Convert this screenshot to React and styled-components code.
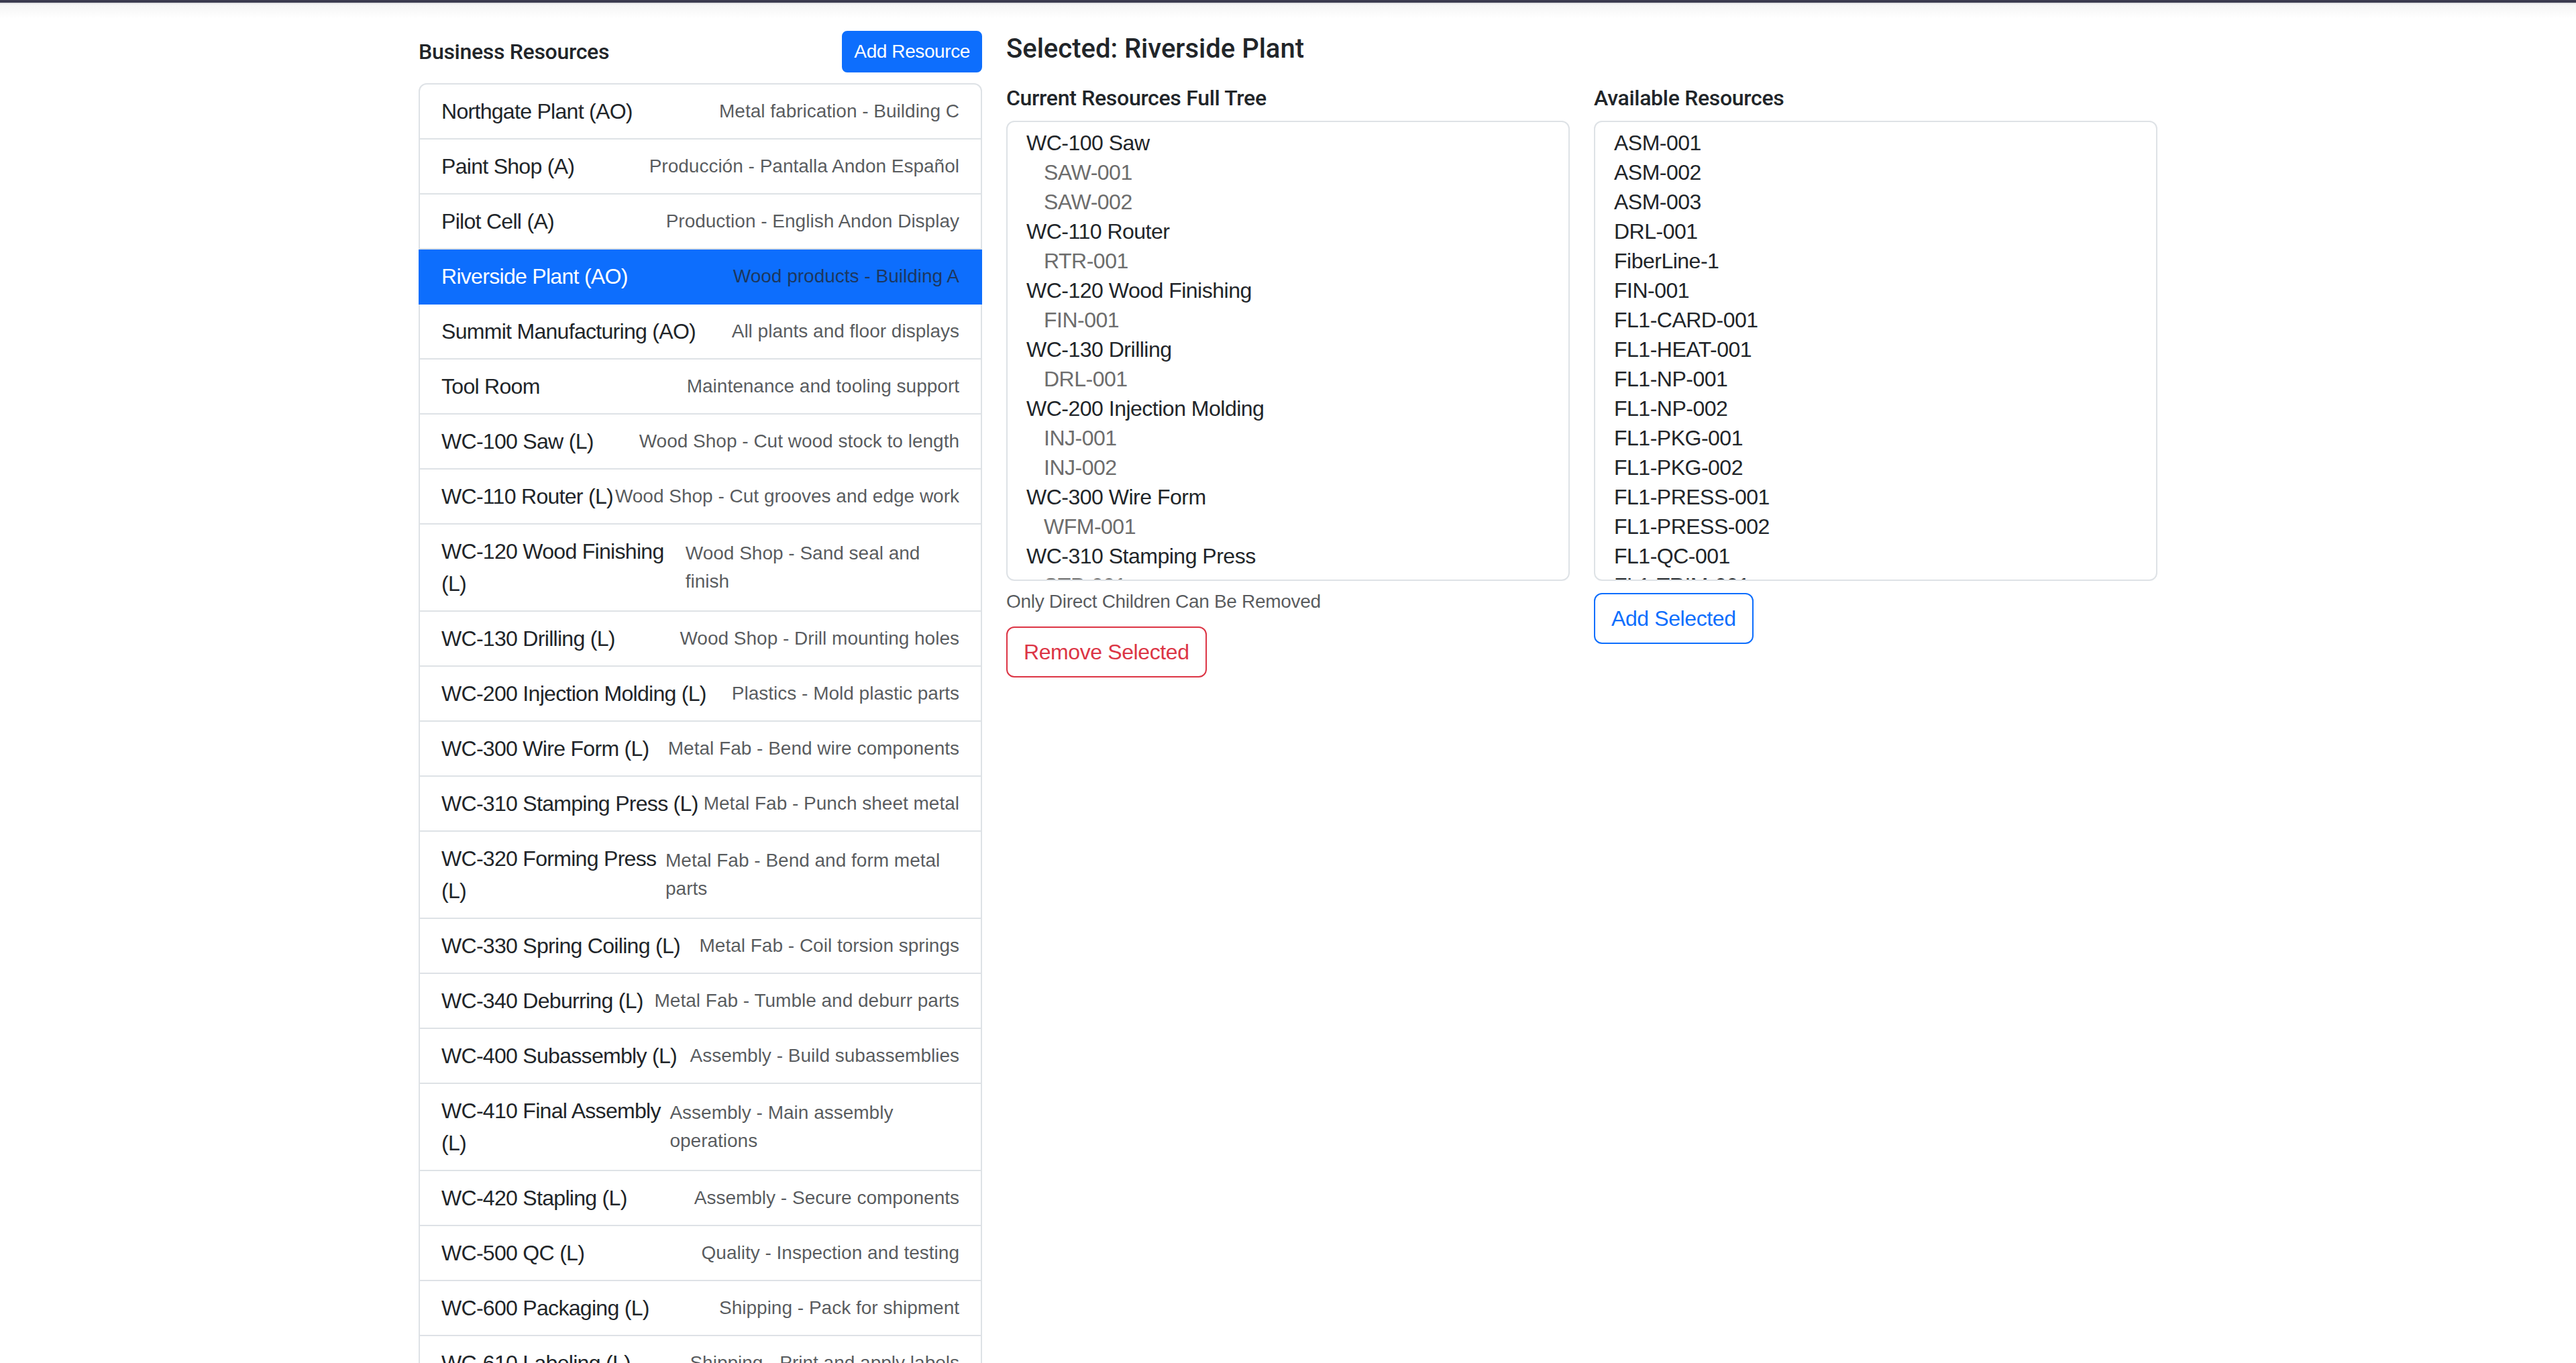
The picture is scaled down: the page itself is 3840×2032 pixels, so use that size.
import styled, { createGlobalStyle } from "styled-components";

const GlobalStyle = createGlobalStyle`
  * { box-sizing: border-box; }
  html, body {
    margin: 0;
    overflow: hidden;
    background: #fff;
  }
  body {
    font-family: "Liberation Sans", Arial, sans-serif;
    font-size: 32px;
    line-height: 1.5;
    color: #212529;
  }
`;

const muted = "rgba(33, 37, 41, 0.75)";

const TopStrip = styled.div`
  height: 28px;
  background: linear-gradient(
    to bottom,
    #3b3a4f 0,
    #3b3a4f 4px,
    #e2e2e4 4px,
    #e2e2e4 6px,
    #f5f5f5 6px,
    #ffffff 28px
  );
`;

const Page = styled.main`
  width: 2592px;
  margin: 0 auto;
  padding-top: 18px;
  display: grid;
  grid-template-columns: repeat(3, 1fr);
  column-gap: 36px;
  align-items: start;
`;

const Sidebar = styled.section`
  display: flex;
  flex-direction: column;
`;

const SidebarHeader = styled.div`
  display: flex;
  align-items: center;
  justify-content: space-between;
  margin-bottom: 16px;
`;

const Heading = styled.h6`
  margin: 0;
  font-family: Roboto, "Liberation Sans", sans-serif;
  font-size: 32px;
  font-weight: 500;
  line-height: 1.2;
  letter-spacing: -0.3px;
  color: #212529;
`;

const SmallButton = styled.button`
  font-family: inherit;
  font-size: 28px;
  line-height: 42px;
  letter-spacing: -0.4px;
  padding: 8px 16px;
  border: 2px solid #0d6efd;
  border-radius: 8px;
  background: #0d6efd;
  color: #fff;
  cursor: pointer;
`;

const ResourceList = styled.ul`
  list-style: none;
  margin: 0;
  padding: 0;
  display: flex;
  flex-direction: column;
`;

const ResourceItem = styled.li`
  display: flex;
  align-items: center;
  justify-content: space-between;
  padding: 16px 32px;
  border: 2px solid ${(p) => (p.$active ? "#0d6efd" : "#dee2e6")};
  background: ${(p) => (p.$active ? "#0d6efd" : "#fff")};
  color: ${(p) => (p.$active ? "#fff" : "#212529")};
  font-size: 32px;
  line-height: 48px;
  cursor: pointer;

  & + & {
    border-top-width: 0;
  }
  &:first-child {
    border-top-left-radius: 12px;
    border-top-right-radius: 12px;
  }
  &:last-child {
    border-bottom-left-radius: 12px;
    border-bottom-right-radius: 12px;
  }
`;

const ResourceName = styled.span`
  letter-spacing: -0.7px;
`;

const ResourceDescription = styled.small`
  font-size: 28px;
  line-height: 1.5;
  color: ${muted};
`;

const Detail = styled.section`
  grid-column: span 2;
  display: grid;
  grid-template-columns: repeat(2, 1fr);
  column-gap: 36px;
  align-items: start;
`;

const DetailTitle = styled.h5`
  grid-column: 1 / -1;
  margin: 3px 0 30px;
  font-family: Roboto, "Liberation Sans", sans-serif;
  font-size: 40px;
  font-weight: 500;
  line-height: 1.2;
  color: #212529;
`;

const Pane = styled.div`
  display: flex;
  flex-direction: column;
  align-items: flex-start;
`;

const PaneHeading = styled(Heading)`
  margin-bottom: 15px;
`;

const ListBox = styled.div`
  align-self: stretch;
  height: 686px;
  padding: 10px 24px 0;
  border: 2px solid #dee2e6;
  border-radius: 12px;
  overflow: hidden;
`;

const Option = styled.div`
  height: 44px;
  padding: 0 4px 2px;
  padding-left: ${(p) => (p.$child ? "30px" : "4px")};
  font-size: 32px;
  line-height: 42px;
  letter-spacing: -0.5px;
  white-space: nowrap;
  color: ${(p) => (p.$child ? "#6d6d6d" : "#212529")};
`;

const HelpText = styled.div`
  margin-top: 10px;
  font-size: 28px;
  line-height: 42px;
  letter-spacing: -0.3px;
  color: ${muted};
`;

const OutlineButton = styled.button`
  margin-top: ${(p) => p.$gap || "16px"};
  font-family: inherit;
  font-size: 32px;
  line-height: 48px;
  letter-spacing: -0.4px;
  padding: 12px 24px;
  border: 2px solid ${(p) => p.$color};
  border-radius: 12px;
  background: transparent;
  color: ${(p) => p.$color};
  cursor: pointer;
`;

const resources = [
  ["Northgate Plant (AO)", "Metal fabrication - Building C"],
  ["Paint Shop (A)", "Producción - Pantalla Andon Español"],
  ["Pilot Cell (A)", "Production - English Andon Display"],
  ["Riverside Plant (AO)", "Wood products - Building A"],
  ["Summit Manufacturing (AO)", "All plants and floor displays"],
  ["Tool Room", "Maintenance and tooling support"],
  ["WC-100 Saw (L)", "Wood Shop - Cut wood stock to length"],
  ["WC-110 Router (L)", "Wood Shop - Cut grooves and edge work"],
  ["WC-120 Wood Finishing (L)", "Wood Shop - Sand seal and finish"],
  ["WC-130 Drilling (L)", "Wood Shop - Drill mounting holes"],
  ["WC-200 Injection Molding (L)", "Plastics - Mold plastic parts"],
  ["WC-300 Wire Form (L)", "Metal Fab - Bend wire components"],
  ["WC-310 Stamping Press (L)", "Metal Fab - Punch sheet metal"],
  ["WC-320 Forming Press (L)", "Metal Fab - Bend and form metal parts"],
  ["WC-330 Spring Coiling (L)", "Metal Fab - Coil torsion springs"],
  ["WC-340 Deburring (L)", "Metal Fab - Tumble and deburr parts"],
  ["WC-400 Subassembly (L)", "Assembly - Build subassemblies"],
  ["WC-410 Final Assembly (L)", "Assembly - Main assembly operations"],
  ["WC-420 Stapling (L)", "Assembly - Secure components"],
  ["WC-500 QC (L)", "Quality - Inspection and testing"],
  ["WC-600 Packaging (L)", "Shipping - Pack for shipment"],
  ["WC-610 Labeling (L)", "Shipping - Print and apply labels"],
];

const tree = [
  { name: "WC-100 Saw", children: ["SAW-001", "SAW-002"] },
  { name: "WC-110 Router", children: ["RTR-001"] },
  { name: "WC-120 Wood Finishing", children: ["FIN-001"] },
  { name: "WC-130 Drilling", children: ["DRL-001"] },
  { name: "WC-200 Injection Molding", children: ["INJ-001", "INJ-002"] },
  { name: "WC-300 Wire Form", children: ["WFM-001"] },
  { name: "WC-310 Stamping Press", children: ["STP-001"] },
];

const available = [
  "ASM-001",
  "ASM-002",
  "ASM-003",
  "DRL-001",
  "FiberLine-1",
  "FIN-001",
  "FL1-CARD-001",
  "FL1-HEAT-001",
  "FL1-NP-001",
  "FL1-NP-002",
  "FL1-PKG-001",
  "FL1-PKG-002",
  "FL1-PRESS-001",
  "FL1-PRESS-002",
  "FL1-QC-001",
  "FL1-TRIM-001",
];

const App = () => {
  return (
    <>
      <GlobalStyle />
      <TopStrip />
      <Page>
        <Sidebar>
          <SidebarHeader>
            <Heading>Business Resources</Heading>
            <SmallButton>Add Resource</SmallButton>
          </SidebarHeader>
          <ResourceList>
            {resources.map(([name, description]) => (
              <ResourceItem key={name} $active={name === "Riverside Plant (AO)"}>
                <ResourceName>{name}</ResourceName>
                <ResourceDescription>{description}</ResourceDescription>
              </ResourceItem>
            ))}
          </ResourceList>
        </Sidebar>

        <Detail>
          <DetailTitle>Selected: Riverside Plant</DetailTitle>
          <Pane>
            <PaneHeading>Current Resources Full Tree</PaneHeading>
            <ListBox>
              {tree.map((node) => (
                <div key={node.name}>
                  <Option>{node.name}</Option>
                  {node.children.map((child) => (
                    <Option key={child} $child>
                      {child}
                    </Option>
                  ))}
                </div>
              ))}
            </ListBox>
            <HelpText>Only Direct Children Can Be Removed</HelpText>
            <OutlineButton $color="#dc3545">Remove Selected</OutlineButton>
          </Pane>
          <Pane>
            <PaneHeading>Available Resources</PaneHeading>
            <ListBox>
              {available.map((item) => (
                <Option key={item}>{item}</Option>
              ))}
            </ListBox>
            <OutlineButton $color="#0d6efd" $gap="18px">
              Add Selected
            </OutlineButton>
          </Pane>
        </Detail>
      </Page>
    </>
  );
};

export default App;
